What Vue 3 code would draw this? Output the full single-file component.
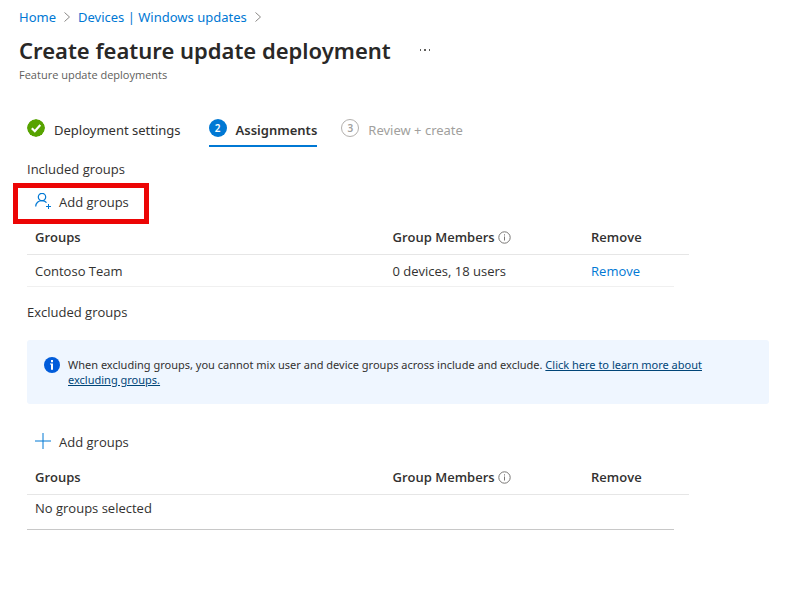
<script setup>
import { ref } from 'vue'

const included = ref([{ name: 'Contoso Team', members: '0 devices, 18 users' }])
const excluded = ref([])

function removeGroup(index) {
  included.value.splice(index, 1)
}
</script>

<template>
  <div class="page">
    <nav class="breadcrumb" aria-label="Breadcrumb">
      <a href="#">Home</a>
      <svg class="chevron" viewBox="0 0 8 12" aria-hidden="true"><path d="M1.500 1.500 6.500 6l-5 4.500" /></svg>
      <a href="#">Devices | Windows updates</a>
      <svg class="chevron" viewBox="0 0 8 12" aria-hidden="true"><path d="M1.500 1.500 6.500 6l-5 4.500" /></svg>
    </nav>

    <header class="heading">
      <div class="title-row">
        <h1>Create feature update deployment</h1>
        <button type="button" class="more" aria-label="More">
          <svg viewBox="0 0 12 2" aria-hidden="true">
            <path d="M1 0h1v2H1zM5 0h2v2H5zM10 0h1v2h-1z" />
          </svg>
        </button>
      </div>
      <p class="subtitle">Feature update deployments</p>
    </header>

    <main>
      <nav class="steps" aria-label="Steps">
        <button type="button" class="step">
          <svg class="badge" viewBox="0 0 18 18" aria-hidden="true">
            <circle cx="9" cy="9" r="9" fill="#57a300" />
            <path d="M4.800 9.200l3 3 5.500-6.200" fill="none" stroke="#fff" stroke-width="2.200" />
          </svg>
          <span>Deployment settings</span>
        </button>
        <button type="button" class="step active" aria-current="step">
          <span class="badge number">2</span>
          <span>Assignments</span>
        </button>
        <button type="button" class="step pending" disabled>
          <span class="badge number">3</span>
          <span>Review + create</span>
        </button>
      </nav>

      <section>
        <h2>Included groups</h2>
        <div class="highlight">
          <button type="button" class="command">
            <svg class="icon" viewBox="0 0 18 18" aria-hidden="true">
              <circle cx="7" cy="4" r="3.700" stroke-width="1.200" />
              <path d="M.7 13.500c0-3.500 2.700-5.800 6.300-5.800 1.900 0 3.500.7 4.500 1.900" stroke-width="1.200" />
              <path d="M13.500 11v5M11 13.500h5" />
            </svg>
            Add groups
          </button>
        </div>
        <table>
          <colgroup><col class="c-name" /><col class="c-members" /><col /><col class="c-end" /></colgroup>
          <thead>
            <tr>
              <th scope="col">Groups</th>
              <th scope="col">
                <span class="with-info">Group Members
                  <svg class="info" viewBox="0 0 13 13" aria-hidden="true">
                    <circle cx="6.500" cy="6.500" r="5.700" /><path d="M6.500 5.500v4M6.500 3.300v1.200" />
                  </svg>
                </span>
              </th>
              <th scope="col" colspan="2">Remove</th>
            </tr>
          </thead>
          <tbody>
            <tr v-for="(group, i) in included" :key="group.name">
              <td>{{ group.name }}</td>
              <td>{{ group.members }}</td>
              <td><a href="#" @click.prevent="removeGroup(i)">Remove</a></td>
            </tr>
          </tbody>
        </table>
      </section>

      <section class="excluded">
        <h2>Excluded groups</h2>
        <div class="banner" role="note">
          <svg class="banner-icon" viewBox="0 0 16 16" aria-hidden="true">
            <circle cx="8" cy="8" r="8" fill="#015cda" />
            <path d="M7 3h2v2.200H7zM6 6.400h3V12.800H7V7.600H6z" fill="#fff" />
          </svg>
          <p>
            When excluding groups, you cannot mix user and device groups across include and exclude.
            <a href="#">Click here to learn more about excluding groups.</a>
          </p>
        </div>
        <button type="button" class="command">
          <svg class="icon" viewBox="0 0 18 18" aria-hidden="true"><path d="M8 0v16M0 8h16" /></svg>
          Add groups
        </button>
        <table class="empty-table">
          <colgroup><col class="c-name" /><col class="c-members" /><col /><col class="c-end" /></colgroup>
          <thead>
            <tr>
              <th scope="col">Groups</th>
              <th scope="col">
                <span class="with-info">Group Members
                  <svg class="info" viewBox="0 0 13 13" aria-hidden="true">
                    <circle cx="6.500" cy="6.500" r="5.700" /><path d="M6.500 5.500v4M6.500 3.300v1.200" />
                  </svg>
                </span>
              </th>
              <th scope="col" colspan="2">Remove</th>
            </tr>
          </thead>
          <tbody>
            <tr v-if="!excluded.length">
              <td colspan="3">No groups selected</td>
            </tr>
          </tbody>
        </table>
      </section>
    </main>
  </div>
</template>

<style>
body {
  background: #fff;
}
</style>

<style scoped>
.page {
  padding: 8px 21px 24px 19px;
  font-family: "Segoe UI", "Open Sans", "Noto Sans", sans-serif;
  font-size: 13px;
  line-height: 18px;
  color: #323130;
}
button {
  font: inherit;
  color: inherit;
  background: none;
  border: 0;
  padding: 0;
}
a {
  color: #0078d4;
  text-decoration: none;
}
.breadcrumb,
h1,
.steps {
  font-family: "Segoe UI", "Noto Sans", sans-serif;
}
.breadcrumb {
  display: flex;
  align-items: center;
  gap: 7px;
}
.chevron {
  width: 8px;
  height: 12px;
  fill: none;
  stroke: #8a8886;
}
.title-row {
  display: flex;
  align-items: center;
  gap: 28px;
  margin-top: 8px;
}
h1 {
  margin: 0;
  font-size: 22px;
  line-height: 32px;
  font-weight: 600;
  color: #292827;
}
.more {
  display: flex;
}
.more svg {
  width: 12px;
  height: 2px;
  fill: #605e5c;
}
.subtitle {
  margin: 0;
  font-size: 11px;
  line-height: 18px;
  color: #605e5c;
}
main {
  padding: 30px 0 0 8px;
}
.steps {
  display: flex;
  gap: 28px;
}
.step {
  display: flex;
  align-items: center;
  gap: 9px;
  height: 33px;
  border-bottom: 2px solid transparent;
}
.active {
  border-color: #0078d4;
  font-weight: 600;
}
.step.pending {
  margin-left: -4px;
  color: #a19f9d;
}
.badge {
  box-sizing: border-box;
  width: 18px;
  height: 18px;
  margin-bottom: 3px;
  border-radius: 50%;
}
.number {
  display: flex;
  align-items: center;
  justify-content: center;
  font-size: 10px;
  font-weight: 600;
}
.active .number {
  background: #0078d4;
  color: #fff;
}
.pending .number {
  border: 1px solid #b3b0ad;
}
h2 {
  margin: 13px 0 0;
  font-size: 13px;
  line-height: 18px;
  font-weight: 400;
}
.highlight {
  width: fit-content;
  margin: 5px 0 0 -14px;
  padding: 5px 15px 8px 17px;
  border: 5px solid #ec0505;
}
.command {
  display: flex;
  align-items: center;
  gap: 6px;
}
.icon {
  width: 18px;
  height: 18px;
  fill: none;
  stroke: #0078d4;
}
table {
  width: 100%;
  max-width: 662px;
  table-layout: fixed;
  border-collapse: collapse;
}
.c-name {
  width: 54%;
}
.c-members {
  width: 30%;
}
.c-end {
  width: 15px;
}
th,
td {
  padding: 4px 8px 8px;
  text-align: left;
}
th {
  border-bottom: 1px solid #e6e6e6;
  font-weight: 600;
}
td {
  padding: 7px 8px 6px;
  border-bottom: 1px solid #f0f0f0;
}
.with-info {
  display: flex;
  align-items: center;
  gap: 3px;
}
.info {
  width: 13px;
  height: 13px;
  fill: none;
  stroke: #797775;
}
.excluded h2 {
  margin-top: 16px;
}
.banner {
  display: flex;
  gap: 8px;
  margin: 19px 0 29px;
  padding: 17px 40px 17px 17px;
  border-radius: 3px;
  background: #eff6ff;
}
.banner-icon {
  flex: none;
  width: 16px;
  height: 16px;
}
.banner p {
  margin: 0;
  font-family: "Segoe UI", "Noto Sans", sans-serif;
  font-size: 11px;
  line-height: 15px;
}
.banner a {
  color: #004578;
  text-decoration: underline;
}
.excluded .command {
  margin: 0 0 0 8px;
}
.empty-table {
  margin-top: 13px;
}
.empty-table td {
  padding: 4px 8px 12px;
  border-color: #c8c8c8;
}
</style>
